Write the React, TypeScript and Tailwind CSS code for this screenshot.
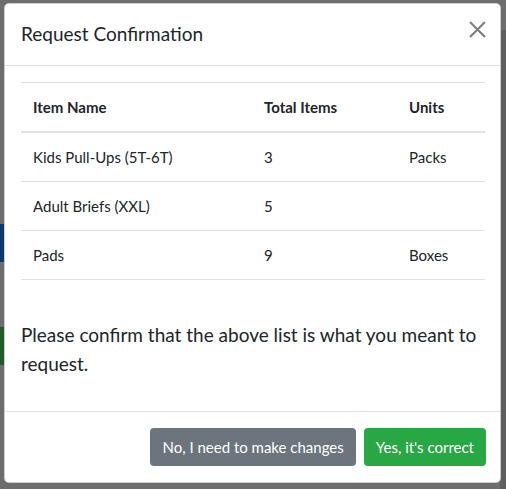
import React from 'react';

const rows = [
  { name: 'Kids Pull-Ups (5T-6T)', total: 3, units: 'Packs' },
  { name: 'Adult Briefs (XXL)', total: 5, units: '' },
  { name: 'Pads', total: 9, units: 'Boxes' },
];

export default function App() {
  return (
    <div
      className="relative w-[506px] h-[489px] overflow-hidden bg-[#6d6d6d] pt-[3px] pl-[4px] text-[#212529]"
      style={{ fontFamily: 'Lato, "Open Sans", sans-serif' }}
    >
      {/* page behind the backdrop */}
      <div className="absolute left-0 top-[224px] w-[6px] h-[38px] bg-[#0d3870]" />
      <div className="absolute left-0 top-[327px] w-[6px] h-[38px] bg-[#1f5a2b]" />
      <div className="absolute right-0 top-[30px] w-[6px] h-[459px] bg-[#5e5e5e]" />

      {/* Modal */}
      <div className="relative flex flex-col w-[497px] h-[480px] bg-white rounded-[5px] border border-black/20">
        {/* Header */}
        <div className="flex items-start justify-between px-4 pt-[15px] pb-4 border-b border-[#dee2e6]">
          <h5 className="text-[19px] leading-[30px] font-normal">Request Confirmation</h5>
          <button className="mt-0 mr-[-3px] w-[20px] h-[20px] flex items-center justify-center">
            <svg width="19" height="19" viewBox="0 0 19 19" fill="none" stroke="#7d7d7d" strokeWidth="2">
              <path d="M2 2L17 17M17 2L2 17" />
            </svg>
          </button>
        </div>

        {/* Body */}
        <div className="flex-1 pl-4 pr-[15px] pt-4">
          <table className="w-full text-[15px] border-collapse">
            <thead>
              <tr className="border-t border-[#dee2e6]">
                <th className="w-[231px] text-left font-bold p-3 leading-6 border-b-2 border-[#dee2e6]">Item Name</th>
                <th className="w-[145px] text-left font-bold p-3 leading-6 border-b-2 border-[#dee2e6]">Total Items</th>
                <th className="text-left font-bold p-3 leading-6 border-b-2 border-[#dee2e6]">Units</th>
              </tr>
            </thead>
            <tbody>
              {rows.map((r) => (
                <tr key={r.name} className="border-b border-[#dee2e6]">
                  <td className="p-3 leading-6">{r.name}</td>
                  <td className="p-3 leading-6">{r.total}</td>
                  <td className="p-3 leading-6">{r.units}</td>
                </tr>
              ))}
            </tbody>
          </table>
          <p className="mt-[40px] text-[19px] leading-[29px]">
            Please confirm that the above list is what you meant to request.
          </p>
        </div>

        {/* Footer */}
        <div className="flex justify-end items-center pl-3 pr-[10px] py-3 border-t border-[#dee2e6]">
          <button className="m-1 px-3 h-[38px] text-[15px] text-white bg-[#6c757d] rounded-[4px]">
            No, I need to make changes
          </button>
          <button className="m-1 px-3 h-[38px] text-[15px] text-white bg-[#28a745] rounded-[4px]">
            Yes, it's correct
          </button>
        </div>
      </div>
    </div>
  );
}
